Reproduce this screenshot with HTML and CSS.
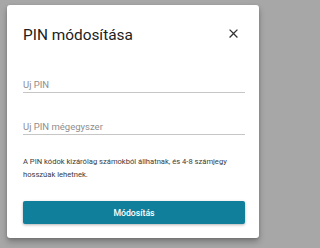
FILE: index.html
```html
<!DOCTYPE html>
<html lang="hu">
<head>
<meta charset="utf-8">
<link rel="stylesheet" href="styles.css">
</head>
<body>
<div class="dialog">
  <div class="header">
    <h1 class="title">PIN módosítása</h1>
    <button class="close" aria-label="Bezárás">
      <svg width="15" height="15" viewBox="0 0 24 24"><path d="M19 6.41L17.59 5 12 10.59 6.41 5 5 6.41 10.59 12 5 17.59 6.41 19 12 13.41 17.59 19 19 17.59 13.41 12z" fill="#333"/></svg>
    </button>
  </div>
  <div class="field field-first"><span class="placeholder">Uj PIN</span></div>
  <div class="field field-second"><span class="placeholder">Uj PIN mégegyszer</span></div>
  <p class="help">A PIN kódok kizárólag számokból állhatnak, és 4-8 számjegy hosszúak lehetnek.</p>
  <button class="submit">Módosítás</button>
</div>
</body>
</html>
```

FILE: styles.css
```css
html, body {
  margin: 0;
  padding: 0;
  background: #a7a7a7;
  font-family: Roboto, "Noto Sans", sans-serif;
}
body {
  padding: 5px 0 0 7px;
  height: 248px;
  box-sizing: border-box;
  overflow: hidden;
}
.dialog {
  width: 252px;
  height: 233px;
  box-sizing: border-box;
  padding: 20px 14px 0 16px;
  background: #fff;
  border-radius: 3px;
  box-shadow: 0 4px 6px rgba(0, 0, 0, 0.25), 0 1px 3px rgba(0, 0, 0, 0.15);
  display: flex;
  flex-direction: column;
}
.header {
  display: flex;
  justify-content: space-between;
  align-items: center;
  height: 20px;
}
.title {
  margin: 0;
  font-size: 15.4px;
  line-height: 20px;
  font-weight: 400;
  color: #212121;
}
.close {
  width: 24px;
  height: 24px;
  margin-top: -3px;
  padding: 0;
  border: 0;
  background: none;
  display: flex;
  align-items: center;
  justify-content: center;
}
.field {
  padding-bottom: 1px;
  border-bottom: 1px solid #c6c6c6;
  font-size: 9.5px;
  line-height: 12px;
  color: #8e8e8e;
}
.field-first {
  margin-top: 34px;
}
.field-second {
  margin-top: 28px;
}
.help {
  margin: 20px 0 0;
  font-size: 7.6px;
  line-height: 13px;
  color: #3a3a3a;
}
.submit {
  margin-top: 20px;
  height: 23px;
  border: 0;
  border-radius: 2px;
  background: #0f7f9c;
  color: #fff;
  font-family: Roboto, "Noto Sans", sans-serif;
  font-size: 8.7px;
  font-weight: 500;
  box-shadow: 0 1px 3px rgba(0, 0, 0, 0.3);
  display: flex;
  align-items: center;
  justify-content: center;
}
```
